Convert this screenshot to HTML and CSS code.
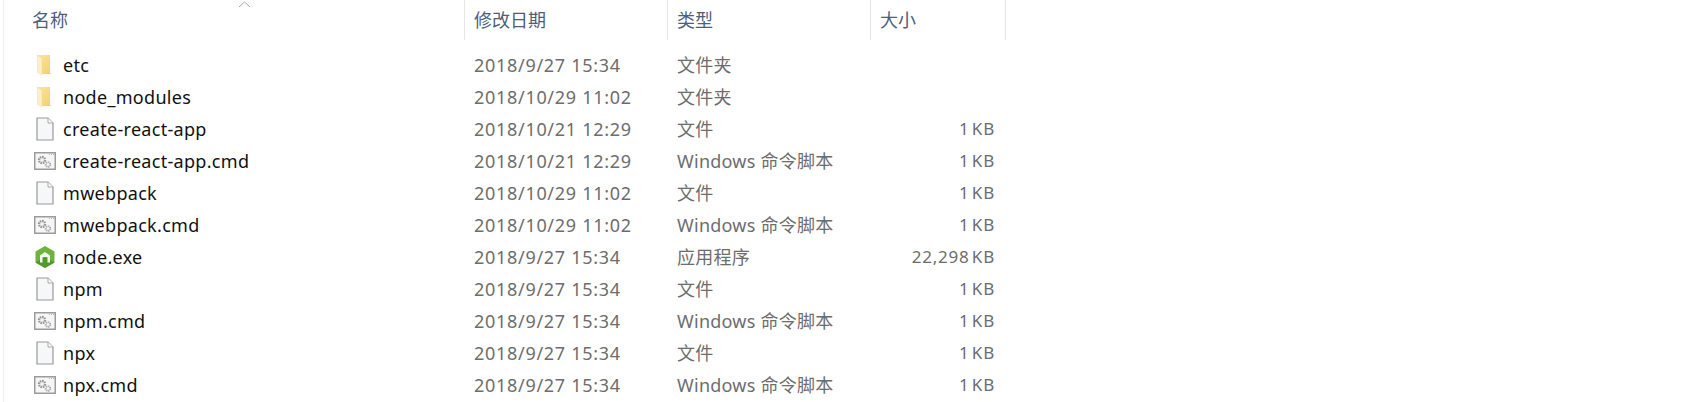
FILE: index.html

```html
<!DOCTYPE html>
<html lang="zh-CN">
<head>
  <meta charset="UTF-8">
  <title>bin</title>
  <link rel="stylesheet" href="styles.css">
</head>
<body>
  <svg class="defs" width="0" height="0">
    <defs>
      <linearGradient id="folderBack" x1="0" y1="0" x2="1" y2="1">
        <stop offset="0" stop-color="#fbe6a0"/>
        <stop offset="1" stop-color="#f3cf6c"/>
      </linearGradient>
      <symbol id="folder" viewBox="0 0 16 22">
        <path d="M0 1h13v18h1v1H4z" fill="url(#folderBack)"/>
        <path d="M0 1l5 3v17l-5-3z" fill="#fdf0c2" stroke="#f2d98c" stroke-width=".5"/>
      </symbol>
      <symbol id="file" viewBox="0 0 18 24">
        <path d="M1 1h11l5 5v17H1z" fill="#f6f7f8" stroke="#999" stroke-width="1.2"/>
        <path d="M12 1v5h5" fill="#fff" stroke="#aaa"/>
      </symbol>
      <symbol id="cmd" viewBox="0 0 22 18">
        <rect x=".75" y=".75" width="20.5" height="16.5" fill="#f6f6f6" stroke="#9b9b9b" stroke-width="1.5"/>
        <path d="M15 2.500h1M17 2.500h1M19 2.500h1" stroke="#b5b5b5"/>
        <circle cx="8" cy="8" r="3" fill="none" stroke="#999" stroke-width="2.400" stroke-dasharray="1.600 .7"/>
        <circle cx="14" cy="12.500" r="2.300" fill="none" stroke="#b0b0b0" stroke-width="2" stroke-dasharray="1.300 .6"/>
      </symbol>
      <symbol id="node" viewBox="0 0 20 22">
        <path d="M10 0l9.500 5.500v11L10 22 .5 16.500v-11z" fill="#6cb33f"/>
        <path d="M10 11l9.500 5.500L10 22 .5 16.500z" fill="#4f9a2c"/>
        <path d="M5 16.500V9.500L10 6l5 3.500v7h-2.500V11h-5v5.500z" fill="#f4f8ee"/>
      </symbol>
    </defs>
  </svg>

  <div class="list">
    <div class="row head">
      <div class="col">名称<svg class="sort" width="13" height="7" viewBox="0 0 13 7"><path d="M1 6l5.500-5L12 6" fill="none" stroke="#a8a8a8"/></svg></div>
      <div class="col">修改日期</div>
      <div class="col">类型</div>
      <div class="col">大小</div>
    </div>
    <div class="rows">
      <div class="row"><div class="name"><span class="icon"><svg width="16" height="22"><use href="#folder"/></svg></span>etc</div><div class="date">2018/9/27 15:34</div><div class="type">文件夹</div><div class="size"></div></div>
      <div class="row"><div class="name"><span class="icon"><svg width="16" height="22"><use href="#folder"/></svg></span>node_modules</div><div class="date">2018/10/29 11:02</div><div class="type">文件夹</div><div class="size"></div></div>
      <div class="row"><div class="name"><span class="icon"><svg width="18" height="24"><use href="#file"/></svg></span>create-react-app</div><div class="date">2018/10/21 12:29</div><div class="type">文件</div><div class="size">1 KB</div></div>
      <div class="row"><div class="name"><span class="icon"><svg width="22" height="18"><use href="#cmd"/></svg></span>create-react-app.cmd</div><div class="date">2018/10/21 12:29</div><div class="type">Windows 命令脚本</div><div class="size">1 KB</div></div>
      <div class="row"><div class="name"><span class="icon"><svg width="18" height="24"><use href="#file"/></svg></span>mwebpack</div><div class="date">2018/10/29 11:02</div><div class="type">文件</div><div class="size">1 KB</div></div>
      <div class="row"><div class="name"><span class="icon"><svg width="22" height="18"><use href="#cmd"/></svg></span>mwebpack.cmd</div><div class="date">2018/10/29 11:02</div><div class="type">Windows 命令脚本</div><div class="size">1 KB</div></div>
      <div class="row"><div class="name"><span class="icon"><svg width="20" height="22"><use href="#node"/></svg></span>node.exe</div><div class="date">2018/9/27 15:34</div><div class="type">应用程序</div><div class="size">22,298 KB</div></div>
      <div class="row"><div class="name"><span class="icon"><svg width="18" height="24"><use href="#file"/></svg></span>npm</div><div class="date">2018/9/27 15:34</div><div class="type">文件</div><div class="size">1 KB</div></div>
      <div class="row"><div class="name"><span class="icon"><svg width="22" height="18"><use href="#cmd"/></svg></span>npm.cmd</div><div class="date">2018/9/27 15:34</div><div class="type">Windows 命令脚本</div><div class="size">1 KB</div></div>
      <div class="row"><div class="name"><span class="icon"><svg width="18" height="24"><use href="#file"/></svg></span>npx</div><div class="date">2018/9/27 15:34</div><div class="type">文件</div><div class="size">1 KB</div></div>
      <div class="row"><div class="name"><span class="icon"><svg width="22" height="18"><use href="#cmd"/></svg></span>npx.cmd</div><div class="date">2018/9/27 15:34</div><div class="type">Windows 命令脚本</div><div class="size">1 KB</div></div>
    </div>
  </div>
</body>
</html>
```

FILE: styles.css

```css
html, body {
  height: 100%;
}
body {
  margin: 0;
  background-color: white;
  font-family: "Noto Sans", "Noto Sans CJK SC", sans-serif;
  font-size: 18px;
  overflow: hidden;
}
.defs {
  display: block;
  height: 0;
}
.list {
  margin-left: 3px;
  border-left: 1px solid #f0f0f0;
  height: 100%;
}
.row {
  display: grid;
  grid-template-columns: 461px 203px 203px 135px;
  height: 32px;
  line-height: 32px;
  white-space: nowrap;
}
.head {
  height: 40px;
  line-height: 40px;
  color: #4c607a;
}
.col {
  position: relative;
  padding-left: 28px;
  border-right: 1px solid #e5e5e5;
}
.col + .col {
  padding-left: 9px;
}
.sort {
  position: absolute;
  top: 1px;
  left: 234px;
}
.rows {
  padding-top: 9px;
}
.name {
  display: flex;
  align-items: center;
  color: #111;
  letter-spacing: .3px;
}
.icon {
  display: flex;
  justify-content: center;
  align-items: center;
  width: 26px;
  margin: 0 5px 0 28px;
}
.date, .type, .size {
  padding-left: 9px;
  color: #6d6d6d;
}
.date {
  letter-spacing: .7px;
}
.type {
  letter-spacing: .25px;
}
.size {
  padding: 0 11px 0 0;
  text-align: right;
  font-size: 17px;
  letter-spacing: .8px;
  word-spacing: -3px;
}
```
